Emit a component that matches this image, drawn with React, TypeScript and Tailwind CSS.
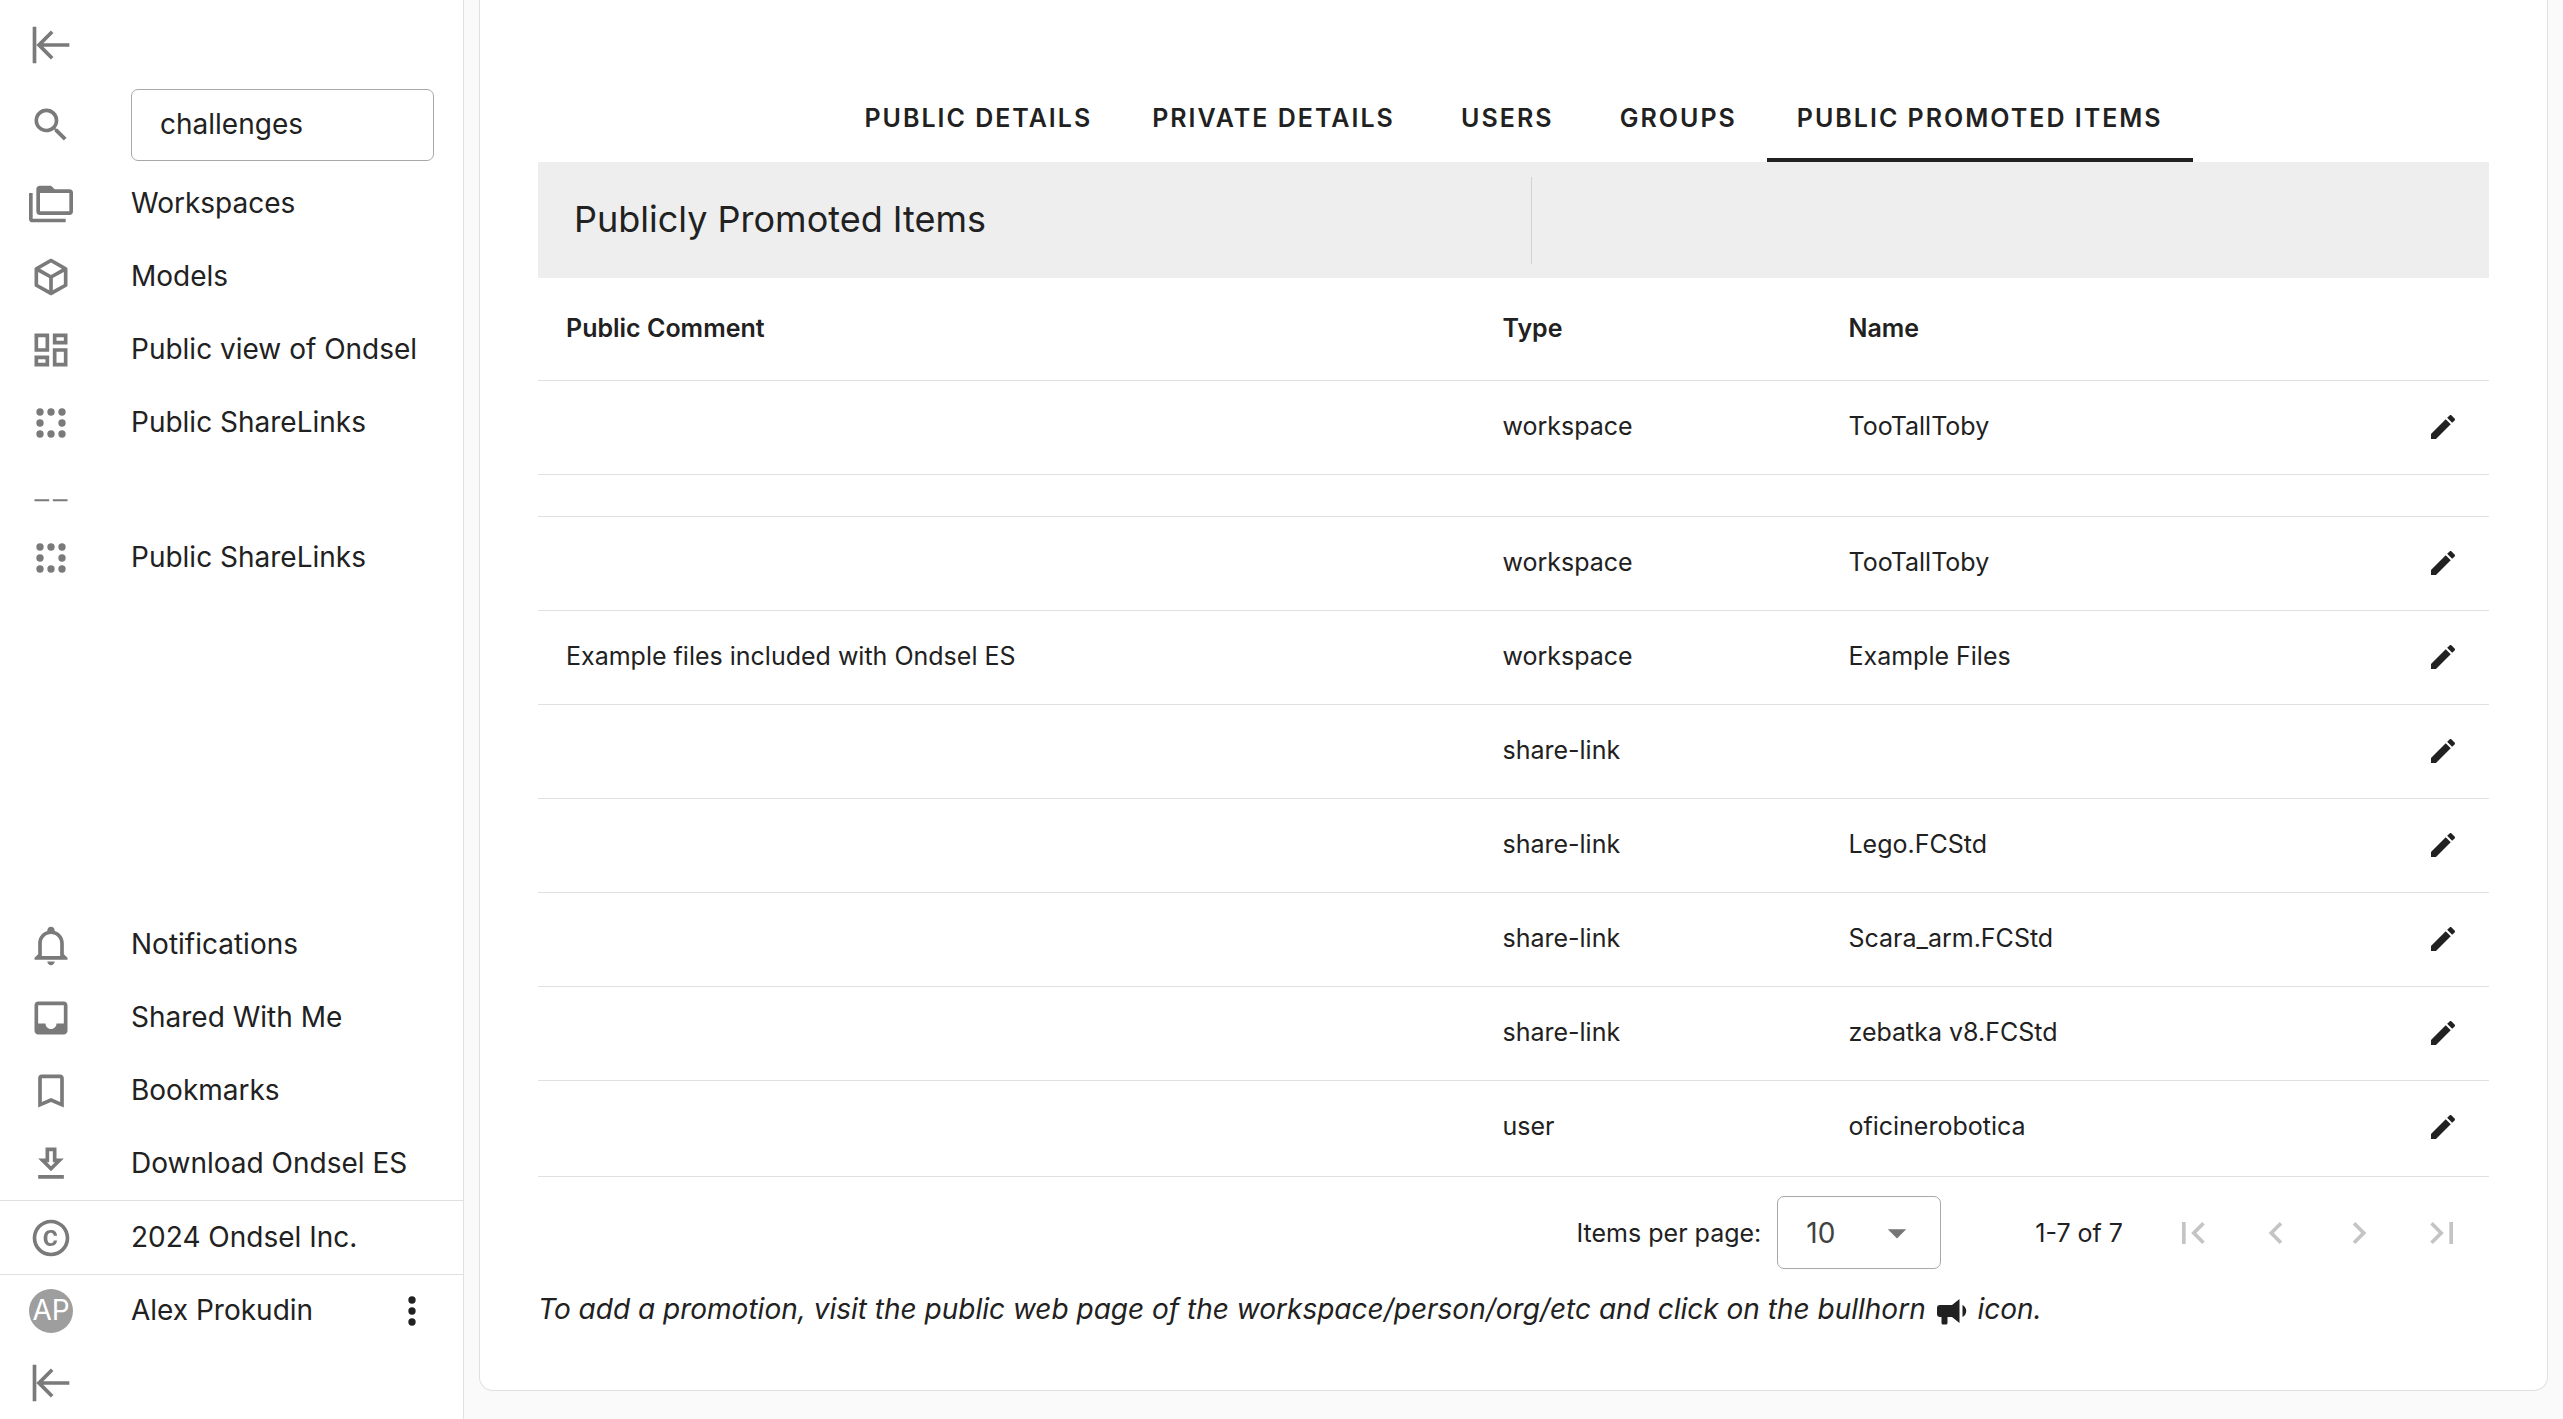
import React from "react";

const ICONS = {
  collapse:
    "M11.92,19.92L4,12L11.92,4.08L13.33,5.5L7.83,11H22V13H7.83L13.34,18.5L11.92,19.92M4,12V2H2V22H4V12Z",
  magnify:
    "M9.5,3A6.5,6.5 0 0,1 16,9.5C16,11.11 15.41,12.59 14.44,13.73L14.71,14H15.5L20.5,19L19,20.5L14,15.5V14.71L13.73,14.44C12.59,15.41 11.11,16 9.5,16A6.5,6.5 0 0,1 3,9.5A6.5,6.5 0 0,1 9.5,3M9.5,5C7,5 5,7 5,9.5C5,12 7,14 9.5,14C12,14 14,12 14,9.5C14,7 12,5 9.5,5Z",
  folders:
    "M22,4A2,2 0 0,1 24,6V16A2,2 0 0,1 22,18H6A2,2 0 0,1 4,16V4A2,2 0 0,1 6,2H12L14,4H22M2,6V20H20V22H2A2,2 0 0,1 0,20V6H2M6,6V16H22V6H6Z",
  cube: "M21,16.5C21,16.88 20.79,17.21 20.47,17.38L12.57,21.82C12.41,21.94 12.21,22 12,22C11.79,22 11.59,21.94 11.43,21.82L3.53,17.38C3.21,17.21 3,16.88 3,16.5V7.5C3,7.12 3.21,6.79 3.53,6.62L11.43,2.18C11.59,2.06 11.79,2 12,2C12.21,2 12.41,2.06 12.57,2.18L20.47,6.62C20.79,6.79 21,7.12 21,7.5V16.5M12,4.15L6.04,7.5L12,10.85L17.96,7.5L12,4.15M5,15.91L11,19.29V12.58L5,9.21V15.91M19,15.91V9.21L13,12.58V19.29L19,15.91Z",
  dashboard:
    "M19,5V7H15V5H19M9,5V11H5V5H9M19,13V19H15V13H19M9,17V19H5V17H9M21,3H13V9H21V3M11,3H3V13H11V3M21,11H13V21H21V11M11,15H3V21H11V15Z",
  dots: "M4,6a2,2 0 1,0 4,0a2,2 0 1,0 -4,0M10,6a2,2 0 1,0 4,0a2,2 0 1,0 -4,0M16,6a2,2 0 1,0 4,0a2,2 0 1,0 -4,0M4,12a2,2 0 1,0 4,0a2,2 0 1,0 -4,0M16,12a2,2 0 1,0 4,0a2,2 0 1,0 -4,0M4,18a2,2 0 1,0 4,0a2,2 0 1,0 -4,0M10,18a2,2 0 1,0 4,0a2,2 0 1,0 -4,0M16,18a2,2 0 1,0 4,0a2,2 0 1,0 -4,0",
  dashes: "M3,17H11V18.1H3V17M13,17H21V18.1H13V17Z",
  bell: "M10 21H14C14 22.1 13.1 23 12 23S10 22.1 10 21M21 19V20H3V19L5 17V11C5 7.9 7 5.2 10 4.3V4C10 2.9 10.9 2 12 2S14 2.9 14 4V4.3C17 5.2 19 7.9 19 11V17L21 19M17 11C17 8.2 14.8 6 12 6S7 8.2 7 11V18H17V11Z",
  inbox:
    "M19 3H4.99c-1.11 0-1.98.89-1.98 2L3 19c0 1.1.88 2 1.99 2H19c1.1 0 2-.9 2-2V5c0-1.11-.9-2-2-2zm0 12h-4c0 1.66-1.35 3-3 3s-3-1.34-3-3H4.99V5H19v10z",
  bookmark:
    "M17,18L12,15.82L7,18V5H17M17,3H7A2,2 0 0,0 5,5V21L12,18L19,21V5C19,3.89 18.1,3 17,3Z",
  download:
    "M13,5V11H14.17L12,13.17L9.83,11H11V5H13M15,3H9V9H5L12,16L19,9H15V3M19,18H5V20H19V18Z",
  copyright:
    "M10.08 10.86c.05-.33.16-.62.3-.87s.34-.46.59-.62c.24-.15.54-.22.91-.23.23.01.44.05.63.13.2.09.38.21.52.36s.25.33.34.53.13.42.14.64h1.79c-.02-.47-.11-.9-.28-1.29s-.4-.73-.7-1.01-.66-.5-1.08-.66-.88-.23-1.39-.23c-.65 0-1.22.11-1.7.34s-.88.53-1.2.92-.56.84-.71 1.36S8 11.29 8 11.87v.27c0 .58.08 1.12.23 1.64s.39.97.71 1.35.72.69 1.2.91 1.05.34 1.7.34c.47 0 .91-.08 1.32-.23s.77-.36 1.08-.63.56-.58.74-.94.29-.74.3-1.15h-1.79c-.01.21-.06.4-.15.58s-.21.33-.36.46-.32.23-.52.3c-.19.07-.39.09-.6.1-.36-.01-.66-.08-.89-.23-.25-.16-.45-.37-.59-.62s-.25-.55-.3-.88-.08-.67-.08-1v-.27c0-.35.03-.68.08-1.01zM12 2C6.48 2 2 6.48 2 12s4.48 10 10 10 10-4.48 10-10S17.52 2 12 2zm0 18c-4.41 0-8-3.59-8-8s3.59-8 8-8 8 3.59 8 8-3.59 8-8 8z",
  more: "M12,16A2,2 0 0,1 14,18A2,2 0 0,1 12,20A2,2 0 0,1 10,18A2,2 0 0,1 12,16M12,10A2,2 0 0,1 14,12A2,2 0 0,1 12,14A2,2 0 0,1 10,12A2,2 0 0,1 12,10M12,4A2,2 0 0,1 14,6A2,2 0 0,1 12,8A2,2 0 0,1 10,6A2,2 0 0,1 12,4Z",
  pencil:
    "M20.71,7.04C21.1,6.65 21.1,6 20.71,5.63L18.37,3.29C18,2.9 17.35,2.9 16.96,3.29L15.12,5.12L18.87,8.87M3,17.25V21H6.75L17.81,9.93L14.06,6.18L3,17.25Z",
  menuDown: "M7,10L12,15L17,10H7Z",
  first: "M18.41,16.59L13.82,12L18.41,7.41L17,6L11,12L17,18L18.41,16.59M6,6H8V18H6V6Z",
  previous: "M15.41,16.58L10.83,12L15.41,7.41L14,6L8,12L14,18L15.41,16.58Z",
  next: "M8.59,16.58L13.17,12L8.59,7.41L10,6L16,12L10,18L8.59,16.58Z",
  last: "M5.59,7.41L10.18,12L5.59,16.59L7,18L13,12L7,6L5.59,7.41M16,6H18V18H16V6Z",
  bullhorn:
    "M12,8H4A2,2 0 0,0 2,10V14A2,2 0 0,0 4,16H5V20A1,1 0 0,0 6,21H8A1,1 0 0,0 9,20V16H12L17,20V4L12,8M21.5,12C21.5,13.71 20.54,15.26 19,16V8C20.53,8.75 21.5,10.3 21.5,12Z",
};

type IconName = keyof typeof ICONS;

function Icon({ name, className = "size-11" }: { name: IconName; className?: string }) {
  return (
    <svg viewBox="0 0 24 24" fill="currentColor" aria-hidden="true" className={`shrink-0 ${className}`}>
      <path d={ICONS[name]} />
    </svg>
  );
}

function NavItem({ icon, label }: { icon: IconName; label: string }) {
  return (
    <a href="#" className="flex h-[73px] items-center gap-[58px] pl-[29px]">
      <Icon name={icon} className="size-11 text-[#7a7a7a]" />
      <span className="pb-0.5 whitespace-nowrap">{label}</span>
    </a>
  );
}

function CollapseButton() {
  return (
    <button type="button" aria-label="Collapse sidebar" className="flex h-[73px] items-center pl-[29px] text-[#7a7a7a]">
      <Icon name="collapse" />
    </button>
  );
}

function Sidebar() {
  return (
    <aside className="flex w-[464px] shrink-0 flex-col border-r border-[#e0e0e0] bg-white pt-2 text-[28px] leading-9">
      <CollapseButton />
      <div className="mt-2 mb-1.5 flex h-[72px] items-center gap-[58px] pr-[29px] pl-[29px]">
        <label htmlFor="search" aria-label="Search" className="text-[#7a7a7a]">
          <Icon name="magnify" />
        </label>
        <input
          id="search"
          type="text"
          defaultValue="challenges"
          className="h-full w-full min-w-0 rounded-[7px] border border-[#a8a8a8] px-7 pb-0.5 outline-none"
        />
      </div>
      <nav className="flex flex-col">
        <NavItem icon="folders" label="Workspaces" />
        <NavItem icon="cube" label="Models" />
        <NavItem icon="dashboard" label="Public view of Ondsel" />
        <NavItem icon="dots" label="Public ShareLinks" />
        <div className="flex h-[62px] items-center pl-[29px] text-[#7a7a7a]">
          <Icon name="dashes" />
        </div>
        <NavItem icon="dots" label="Public ShareLinks" />
      </nav>
      <nav className="mt-auto flex flex-col">
        <NavItem icon="bell" label="Notifications" />
        <NavItem icon="inbox" label="Shared With Me" />
        <NavItem icon="bookmark" label="Bookmarks" />
        <NavItem icon="download" label="Download Ondsel ES" />
        <div className="border-t border-[#e0e0e0]">
          <NavItem icon="copyright" label="2024 Ondsel Inc." />
        </div>
        <div className="flex h-[72px] items-center gap-[58px] border-t border-[#e0e0e0] pr-[29px] pl-[29px]">
          <span className="flex size-11 shrink-0 items-center justify-center rounded-full bg-[#9e9e9e] pb-0.5 text-white">
            AP
          </span>
          <span className="flex-1 pb-0.5 whitespace-nowrap">Alex Prokudin</span>
          <button type="button" aria-label="User menu">
            <Icon name="more" />
          </button>
        </div>
        <CollapseButton />
      </nav>
    </aside>
  );
}

const TABS = ["Public Details", "Private Details", "Users", "Groups", "Public Promoted Items"];

function Tabs() {
  return (
    <div role="tablist" className="flex justify-center">
      {TABS.map((tab, i) => {
        const active = i === TABS.length - 1;
        return (
          <button
            key={tab}
            type="button"
            role="tab"
            aria-selected={active}
            className={`h-[87px] min-w-[165px] border-y-4 border-t-transparent px-[30px] text-[25px] font-semibold tracking-[2px] whitespace-nowrap uppercase ${
              active ? "border-b-[#212121]" : "border-b-transparent"
            }`}
          >
            {tab}
          </button>
        );
      })}
    </div>
  );
}

type Item = { comment: string; type: string; name: string };

const PINNED: Item = { comment: "", type: "workspace", name: "TooTallToby" };

const ITEMS: Item[] = [
  { comment: "", type: "workspace", name: "TooTallToby" },
  { comment: "Example files included with Ondsel ES", type: "workspace", name: "Example Files" },
  { comment: "", type: "share-link", name: "" },
  { comment: "", type: "share-link", name: "Lego.FCStd" },
  { comment: "", type: "share-link", name: "Scara_arm.FCStd" },
  { comment: "", type: "share-link", name: "zebatka v8.FCStd" },
  { comment: "", type: "user", name: "oficinerobotica" },
];

function ItemRow({ item }: { item: Item }) {
  return (
    <tr className="h-[94px] border-b border-[#e0e0e0] last:border-b-0">
      <td className="px-7 pb-0.5">{item.comment}</td>
      <td className="px-7 pb-0.5">{item.type}</td>
      <td className="px-7 pb-0.5">{item.name}</td>
      <td className="pr-[30px]">
        <button type="button" aria-label="Edit item" className="ml-auto flex">
          <Icon name="pencil" className="size-8" />
        </button>
      </td>
    </tr>
  );
}

function ItemsTable() {
  return (
    <table className="w-full table-fixed border-collapse text-left text-[25px] leading-8">
      <colgroup>
        <col className="w-[48%]" />
        <col className="w-[346px]" />
        <col />
        <col className="w-[8%]" />
      </colgroup>
      <thead>
        <tr className="h-[102px] border-b border-[#e0e0e0]">
          <th className="px-7 pb-0.5 font-semibold">Public Comment</th>
          <th className="px-7 pb-0.5 font-semibold">Type</th>
          <th className="px-7 pb-0.5 font-semibold">Name</th>
          <th aria-label="Actions" />
        </tr>
      </thead>
      <tbody>
        <ItemRow item={PINNED} />
        <tr className="h-[42px] border-b border-[#e0e0e0]">
          <td colSpan={4} />
        </tr>
        {ITEMS.map((item, i) => (
          <ItemRow key={i} item={item} />
        ))}
      </tbody>
    </table>
  );
}

const PAGERS: { icon: IconName; label: string }[] = [
  { icon: "first", label: "First page" },
  { icon: "previous", label: "Previous page" },
  { icon: "next", label: "Next page" },
  { icon: "last", label: "Last page" },
];

function TableFooter() {
  return (
    <div className="mt-0.5 flex items-center justify-end border-t border-[#e0e0e0] pt-[19px] pr-1.5 text-[25px] leading-8">
      <label htmlFor="per-page" className="mr-4">
        Items per page:
      </label>
      <div className="relative">
        <select
          id="per-page"
          defaultValue="10"
          className="h-[73px] w-[164px] appearance-none rounded-[7px] border border-[#a8a8a8] bg-white pl-7 text-[28px] text-[#424242] outline-none"
        >
          <option>10</option>
          <option>25</option>
          <option>50</option>
          <option>100</option>
        </select>
        <Icon
          name="menuDown"
          className="pointer-events-none absolute top-1/2 right-[22px] size-11 -translate-y-1/2 text-[#757575]"
        />
      </div>
      <span className="mr-7 ml-[94px]">1-7 of 7</span>
      {PAGERS.map((pager) => (
        <button
          key={pager.icon}
          type="button"
          disabled
          aria-label={pager.label}
          className="flex w-[83px] justify-center text-[#c4c4c4]"
        >
          <Icon name={pager.icon} />
        </button>
      ))}
    </div>
  );
}

export default function App() {
  return (
    <div className="flex min-h-screen bg-[#fafafa] font-['Inter',sans-serif] text-[#212121]">
      <Sidebar />
      <main className="mr-[15px] mb-7 ml-[15px] min-w-0 flex-1 rounded-b-[14px] border-x border-b border-[#e0e0e0] bg-white px-[58px] pt-[75px]">
        <Tabs />
        <header className="flex h-[116px] items-center bg-[#eeeeee] pl-9">
          <h1 className="flex-1 pb-0.5 text-[36px] leading-10">Publicly Promoted Items</h1>
          <div className="h-[87px] w-px bg-[#d2d2d2]" />
          <div className="flex-1" />
        </header>
        <ItemsTable />
        <TableFooter />
        <p className="mt-5 text-[28px] leading-10 italic">
          To add a promotion, visit the public web page of the workspace/person/org/etc and click on the bullhorn{" "}
          <Icon name="bullhorn" className="inline size-9" /> icon.
        </p>
      </main>
    </div>
  );
}
